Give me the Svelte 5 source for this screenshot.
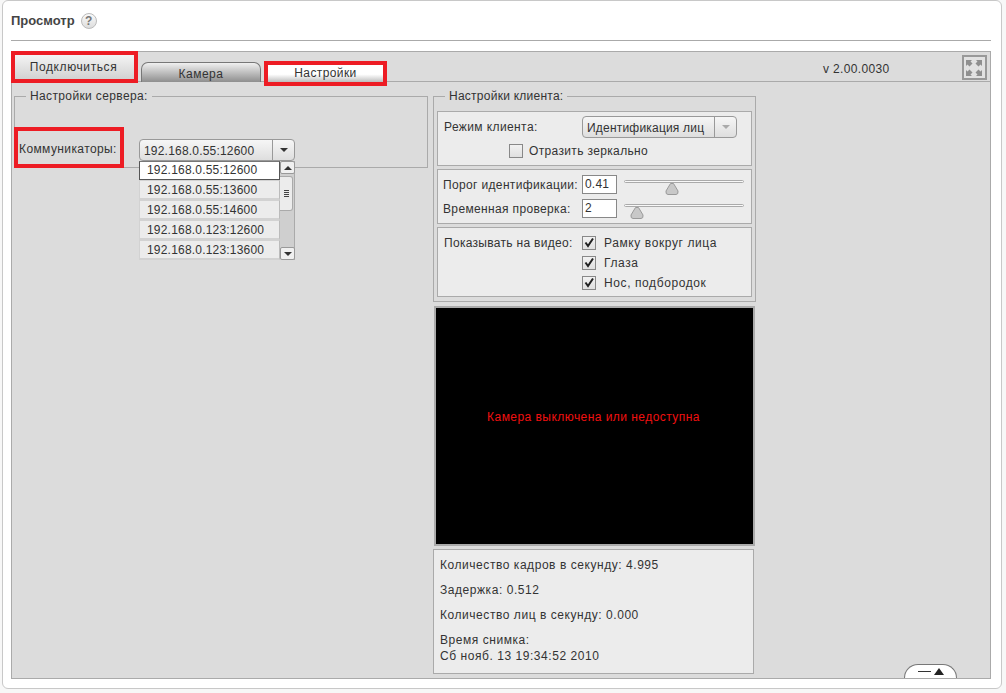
<script>
  const servers = [
    "192.168.0.55:12600",
    "192.168.0.55:13600",
    "192.168.0.55:14600",
    "192.168.0.123:12600",
    "192.168.0.123:13600"
  ];
  const sliders = [
    { label: "Порог идентификации:", value: "0.41", pos: 41 },
    { label: "Временная проверка:", value: "2", pos: 6 }
  ];
  const overlays = ["Рамку вокруг лица", "Глаза", "Нос, подбородок"];
</script>

<div class="card">
  <header class="head">
    <h1>Просмотр</h1>
    <span class="help">?</span>
  </header>

  <section class="panel">
    <div class="toolbar">
      <button class="connect marked">Подключиться</button>
      <div class="tab">Камера</div>
      <div class="tab active marked">Настройки</div>
      <span class="version">v 2.00.0030</span>
      <button class="full" aria-label="Во весь экран">
        <svg width="20" height="20" viewBox="0 0 20 20" fill="#8f8f8f">
          <path d="M2 2h6L6.500 3.500 8.500 5.500 5.500 8.500 3.500 6.500 2 8z" />
          <path d="M18 2h-6l1.500 1.500-2 2 3 3 2-2L18 8z" />
          <path d="M2 18h6l-1.500-1.500 2-2-3-3-2 2L2 12z" />
          <path d="M18 18h-6l1.500-1.500-2-2 3-3 2 2L18 12z" />
        </svg>
      </button>
    </div>

    <div class="content">
      <fieldset class="server">
        <legend>Настройки сервера:</legend>
        <div class="server-row">
          <label class="comm marked">Коммуникаторы:</label>
          <div class="combo-wrap">
            <div class="combo">
              <span class="combo-text">{servers[0]}</span>
              <span class="combo-arrow"><i class="down"></i></span>
            </div>
            <div class="list">
              <ul>
                {#each servers as s, i}
                  <li class:selected={i === 0}>{s}</li>
                {/each}
              </ul>
              <div class="scroll">
                <span class="sbtn"><i class="up"></i></span>
                <span class="sthumb"><b></b><b></b><b></b><b></b></span>
                <span class="sbtn end"><i class="down"></i></span>
              </div>
            </div>
          </div>
        </div>
      </fieldset>

      <div class="client-col">
        <fieldset class="client">
          <legend>Настройки клиента:</legend>

          <div class="box mode">
            <div class="mode-row">
              <span class="mode-label">Режим клиента:</span>
              <div class="combo disabled">
                <span class="combo-text">Идентификация лиц</span>
                <span class="combo-arrow"><i class="down"></i></span>
              </div>
            </div>
            <div class="mirror">
              <span class="check"></span>
              <span>Отразить зеркально</span>
            </div>
          </div>

          <div class="box thresholds">
            {#each sliders as s}
              <div class="slider-row">
                <span class="slabel">{s.label}</span>
                <span class="num">{s.value}</span>
                <div class="slider">
                  <div class="track"></div>
                  <svg class="thumb" style="left: {s.pos}px" width="14" height="12" viewBox="0 0 14 12">
                    <path d="M5.500 .5h3L13 8q.5 3.500-2 3.500H3Q.5 11.500 1 8z" fill="#c8c8c8" stroke="#9a9a9a" />
                  </svg>
                </div>
              </div>
            {/each}
          </div>

          <div class="box show">
            <span class="slabel">Показывать на видео:</span>
            <div class="show-list">
              {#each overlays as o}
                <div class="show-item">
                  <span class="check">
                    <svg width="12" height="12" viewBox="0 0 12 12">
                      <path d="M2.500 5.500 5 9 10 1.500" fill="none" stroke="#222" stroke-width="2" />
                    </svg>
                  </span>
                  <span>{o}</span>
                </div>
              {/each}
            </div>
          </div>
        </fieldset>

        <div class="video"><span>Камера выключена или недоступна</span></div>

        <div class="stats">
          <p>Количество кадров в секунду: 4.995</p>
          <p>Задержка: 0.512</p>
          <p>Количество лиц в секунду: 0.000</p>
          <p>Время снимка:<br />Сб нояб. 13 19:34:52 2010</p>
        </div>
      </div>
    </div>

    <div class="collapse"><b></b><i class="up"></i></div>
  </section>
</div>

<style>
  :global(body) {
    background: #f7f7f7;
    font-family: "Liberation Sans", Arial, sans-serif;
    font-size: 12px;
    letter-spacing: 0.2px;
    color: #333;
  }

  .card {
    box-sizing: border-box;
    width: 1000px;
    height: 689px;
    margin-left: 2px;
    padding: 0 10px 0 8px;
    background: #fff;
    border: 1px solid #c8c8c8;
    border-radius: 6px;
    overflow: hidden;
  }

  .head {
    display: flex;
    align-items: center;
    gap: 6px;
    height: 39px;
    border-bottom: 1px solid #aaa;
  }

  h1 {
    margin: 0;
    font-size: 13px;
    font-weight: bold;
    letter-spacing: 0;
    color: #444;
  }

  .help {
    box-sizing: border-box;
    width: 16px;
    height: 16px;
    border-radius: 50%;
    border: 1px solid #bbb;
    background: linear-gradient(#fafafa, #ddd);
    color: #777;
    font-size: 12px;
    font-weight: bold;
    text-align: center;
    line-height: 14px;
    letter-spacing: 0;
  }

  .panel {
    position: relative;
    box-sizing: border-box;
    height: 628px;
    margin-top: 10px;
    background: #dcdcdc;
    border: 1px solid #aaa;
  }

  .toolbar {
    display: flex;
    align-items: flex-end;
    height: 29px;
    border-bottom: 1px solid #aaa;
  }

  .marked {
    box-sizing: border-box;
    border: 4px solid #ed1c24;
  }

  .connect {
    align-self: flex-start;
    width: 127px;
    height: 32px;
    margin: -1px 3px -3px -1px;
    background: linear-gradient(#f4f4f4, #d2d2d2);
    font: inherit;
    letter-spacing: 0.6px;
    color: inherit;
    padding: 0 2px 0 0;
  }

  .tab {
    box-sizing: border-box;
    width: 120px;
    height: 20px;
    margin-bottom: -1px;
    text-align: center;
    line-height: 23px;
    letter-spacing: 0.5px;
    border: 1px solid #777;
    border-bottom: 0;
    border-radius: 7px 7px 0 0;
    background: linear-gradient(#f0f0f0, #8e8e8e);
  }

  .tab.active {
    width: 123px;
    height: 25px;
    margin: 0 0 -5px 3px;
    border: 4px solid #ed1c24;
    border-radius: 0;
    line-height: 17px;
    letter-spacing: 0.4px;
    background: linear-gradient(#fff 55%, #bdbdbd);
  }

  .version {
    margin-left: 436px;
    align-self: center;
    margin-top: 5px;
    letter-spacing: 0.35px;
  }

  .full {
    align-self: flex-start;
    box-sizing: border-box;
    width: 25px;
    height: 25px;
    margin: 3px 0 0 72px;
    padding: 0;
    display: grid;
    place-items: center;
    background: #e2e2e2;
    border: 2px solid #999;
  }

  .content {
    display: flex;
    align-items: flex-start;
    gap: 5px;
    padding: 7px 0 0 2px;
  }

  fieldset {
    box-sizing: border-box;
    margin: 0;
    padding: 0;
    border: 1px solid #aaa;
    min-width: 0;
  }

  legend {
    padding: 0 4px;
    height: 14px;
    line-height: 14px;
    margin-left: 11px;
    letter-spacing: 0.37px;
  }

  .server {
    width: 414px;
    flex: none;
  }

  .server-row {
    display: flex;
    align-items: flex-start;
    margin: 24px 0 -1px -1px;
  }

  .comm {
    display: block;
    width: 110px;
    height: 41px;
    padding-top: 11px;
    padding-left: 1px;
    letter-spacing: 0.4px;
    white-space: nowrap;
    overflow: hidden;
  }

  .combo-wrap {
    position: relative;
    width: 156px;
    margin: 12px 0 0 15px;
  }

  .combo {
    box-sizing: border-box;
    display: flex;
    height: 22px;
    line-height: 22px;
    border: 1px solid #999;
    border-radius: 4px;
    background: linear-gradient(#f6f6f6, #dedede);
  }

  .combo-text {
    flex: 1;
    padding-left: 4px;
    white-space: nowrap;
  }

  .combo-arrow {
    width: 21px;
    border-left: 1px solid #999;
    display: grid;
    place-items: center;
  }

  .down,
  .up {
    display: block;
    width: 0;
    height: 0;
    border-left: 4px solid transparent;
    border-right: 4px solid transparent;
  }

  .down {
    border-top: 4px solid #333;
  }

  .up {
    border-bottom: 4px solid #333;
  }

  .disabled {
    width: 155px;
    flex: none;
  }

  .disabled .down {
    border-top-color: #aaa;
  }

  .list {
    position: absolute;
    top: 100%;
    left: 0;
    display: flex;
    width: 156px;
    height: 99px;
  }

  ul {
    flex: 1;
    margin: 0;
    padding: 0;
    list-style: none;
  }

  li {
    box-sizing: border-box;
    height: 20px;
    line-height: 18px;
    padding-left: 7px;
    background: #ececec;
    border: 1px solid #d2d2d2;
    border-bottom-width: 2px;
    border-right-color: #bbb;
  }

  li.selected {
    height: 19px;
    line-height: 16px;
    background: #fff;
    border: 1px solid #555;
    border-top-color: #777;
  }

  .scroll {
    position: relative;
    box-sizing: border-box;
    width: 15px;
    display: flex;
    flex-direction: column;
    background: #cfcfcf;
    border-right: 1px solid #aaa;
  }

  .sbtn {
    box-sizing: border-box;
    height: 13px;
    display: grid;
    place-items: center;
    width: 15px;
    background: #f0f0f0;
    border: 1px solid #999;
    border-radius: 2px;
  }

  .sbtn.end {
    margin-top: auto;
  }

  .sthumb {
    position: absolute;
    top: 15px;
    left: 0;
    box-sizing: border-box;
    width: 13px;
    height: 35px;
    display: flex;
    flex-direction: column;
    justify-content: center;
    align-items: center;
    gap: 1px;
    background: #ececec;
    border: 1px solid #aaa;
    border-left: 0;
    border-radius: 0 3px 3px 0;
  }

  .sthumb b {
    display: block;
    width: 5px;
    height: 1px;
    background: #444;
  }

  .client-col {
    width: 323px;
    flex: none;
  }

  .client {
    height: 213px;
    padding: 0 3px;
  }

  .client legend {
    margin-left: 8px;
    letter-spacing: 0.25px;
  }

  .box {
    box-sizing: border-box;
    background: #ececec;
    border: 1px solid #aaa;
  }

  .mode {
    height: 55px;
    margin-top: 8px;
    padding: 4px 6px;
  }

  .mode-row {
    display: flex;
    align-items: flex-start;
  }

  .mode-label {
    width: 138px;
    line-height: 22px;
    letter-spacing: 0.4px;
    white-space: nowrap;
  }

  .mirror {
    display: flex;
    align-items: center;
    gap: 6px;
    margin: 6px 0 0 65px;
    letter-spacing: 0.35px;
  }

  .check {
    box-sizing: border-box;
    display: grid;
    place-items: center;
    width: 14px;
    height: 14px;
    flex: none;
    background: linear-gradient(#f2f2f2, #e0e0e0);
    border: 1px solid #888;
  }

  .thresholds {
    height: 55px;
    margin-top: 3px;
    padding: 5px 0 0 5px;
    display: flex;
    flex-direction: column;
    gap: 5px;
  }

  .slider-row {
    display: flex;
    align-items: center;
    height: 19px;
  }

  .slabel {
    width: 139px;
    letter-spacing: 0.35px;
    white-space: nowrap;
  }

  .num {
    box-sizing: border-box;
    width: 35px;
    height: 19px;
    line-height: 17px;
    padding-left: 2px;
    background: #fff;
    border: 1px solid #888;
  }

  .slider {
    position: relative;
    width: 120px;
    height: 19px;
    margin-left: 7px;
  }

  .track {
    margin-top: 5px;
    height: 1px;
    background: #f8f8f8;
    border: 1px solid #aaa;
    border-radius: 2px;
  }

  .thumb {
    position: absolute;
    top: 8px;
  }

  .show {
    height: 70px;
    margin-top: 3px;
    padding: 8px 0 0 6px;
    display: flex;
    align-items: flex-start;
  }

  .show .slabel {
    width: 138px;
    letter-spacing: 0.3px;
  }

  .show-list {
    display: flex;
    flex-direction: column;
    gap: 6px;
    letter-spacing: 0.6px;
  }

  .show-item {
    display: flex;
    align-items: center;
    gap: 8px;
  }

  .video {
    box-sizing: border-box;
    width: 321px;
    height: 240px;
    margin: 4px 0 0 1px;
    display: flex;
    justify-content: center;
    padding: 102px 2px 0 0;
    background: #000;
    border: 2px solid #aaa;
    color: #f01010;
    letter-spacing: 0.45px;
  }

  .stats {
    box-sizing: border-box;
    width: 321px;
    height: 125px;
    margin-top: 3px;
    padding: 7px 6px;
    background: #ececec;
    border: 1px solid #aaa;
    letter-spacing: 0.55px;
  }

  .stats p {
    margin: 0 0 9px;
    line-height: 16px;
  }

  .collapse {
    position: absolute;
    right: 33px;
    bottom: 0;
    box-sizing: border-box;
    width: 53px;
    height: 14px;
    display: flex;
    justify-content: center;
    align-items: center;
    gap: 3px;
    background: #fff;
    border: 1px solid #777;
    border-bottom: 0;
    border-radius: 14px 14px 0 0;
  }

  .collapse b {
    display: block;
    width: 13px;
    height: 1px;
    background: #333;
  }

  .collapse .up {
    border-left-width: 5px;
    border-right-width: 5px;
    border-bottom-width: 7px;
    border-bottom-color: #222;
  }
</style>
